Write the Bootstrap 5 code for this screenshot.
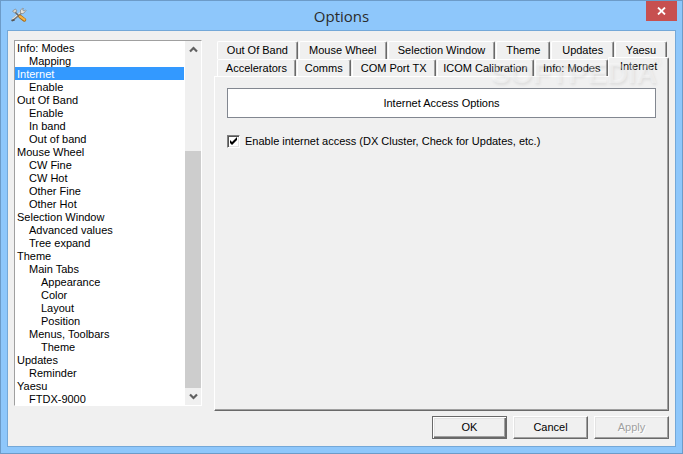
<!DOCTYPE html>
<html lang="en">
<head>
<meta charset="utf-8">
<meta name="viewport" content="width=device-width, initial-scale=1">
<title>Options</title>
<link href="https://cdn.jsdelivr.net/npm/bootstrap@5.3.0/dist/css/bootstrap.min.css" rel="stylesheet">
<style>
body{font:11px/13px "Liberation Sans",Arial,sans-serif;color:#000;background:#8ec7fb}
button,input{font:inherit;color:inherit}
.win{min-height:100vh;border:1px solid #6c9bc8;background:#8ec7fb;padding:0 6px 6px}
.title-bar{height:29px}
.title-bar h1{font:15px/30px "Open Sans","Noto Sans",sans-serif;color:#2b2b2b}
.close-btn{width:31px;height:20px;background:#c75050;margin-right:-1px}
.app-icon{left:4px;top:6px}
.client{background:#f0f0f0;border:1px solid #74a8d8;padding:9px 6px 7px 6px}
.tree-box{width:188px;background:#fff;border:1px solid #fff;border-top-color:#a0a0a0;border-left-color:#a0a0a0}
.tree-list li{padding-left:2px;height:13px;line-height:14px;white-space:nowrap;margin-right:1px}
.tree-list .lv1{padding-left:14px}
.tree-list .lv2{padding-left:26px}
.tree-list .picked{background:#3399ff;color:#fff}
.scroller{width:16px;background:#f0f0f0}
.scroller button{height:17px;line-height:0}
.track{padding-top:93px}
.thumb{background:#cdcdcd}
.main-side{margin-left:12px}
.tabs-a,.tabs-b{display:grid;height:18px;padding:0 1px 0 3px}
.tabs-a{grid-template-columns:82fr 89fr 109fr 55fr 64fr 53fr;margin-top:1px}
.tabs-b{grid-template-columns:80fr 55fr 85fr 99fr 74fr 60fr;padding-right:0}
.tab-btn{border:solid;border-width:1px 1px 0 1px;border-color:#fff #696969 #fff #fff;box-shadow:inset -1px 0 #a0a0a0;border-radius:2px 2px 0 0;background:#f0f0f0;padding:0;margin-right:1px;white-space:nowrap;min-width:0}
.tab-btn.current{height:20px;margin:-2px 0 0 -1px;padding-bottom:2px;z-index:1}
.pane{border:1px solid;border-color:#fff #696969 #696969 #fff;box-shadow:inset -1px -1px #a0a0a0;padding:11px 12px 0 12px;margin-top:-1px}
.banner{height:30px;border:1px solid #828790;background:#fff}
.check-row{margin-top:17px;gap:5px}
.tick{appearance:none;width:13px;height:13px;margin:0;border:1px solid;border-color:#808080 #fff #fff #808080;box-shadow:inset 1px 1px #555,inset -1px -1px #e3e3e3;background:#fff}
.tick:checked{background:#fff url("data:image/svg+xml,%3Csvg xmlns='http://www.w3.org/2000/svg' viewBox='0 0 11 11'%3E%3Cpath d='M2 4v3l2 2 5-5V1L4 6z'/%3E%3C/svg%3E") center/11px no-repeat}
.cmds{margin-top:5px;gap:6px}
.cmd{width:75px;height:23px;background:#f0f0f0;border:1px solid;border-color:#fff #696969 #696969 #fff;box-shadow:inset -1px -1px #a0a0a0,inset 1px 1px #e3e3e3;padding:0 0 1px}
.cmd.main-cmd{border-color:#696969;box-shadow:inset 1px 1px #fff,inset -1px -1px #696969,inset -2px -2px #a0a0a0,inset 2px 2px #e3e3e3}
.cmd:disabled{color:#a0a0a0;text-shadow:1px 1px #fff}
.wmark{right:25px;top:56px;font:bold 29px/32px "Liberation Sans",Arial,sans-serif;color:rgba(255,255,255,.35);text-shadow:1px 2px 3px rgba(0,0,0,.07);pointer-events:none;z-index:2}
.wmark sup{font-size:12px;font-weight:400;position:absolute;left:100%;top:0;line-height:10px;margin-left:-5px}
</style>
<script src="https://cdn.jsdelivr.net/npm/bootstrap@5.3.0/dist/js/bootstrap.bundle.min.js"></script>
</head>
<body>
<div class="win d-flex flex-column position-relative">
  <header class="title-bar d-flex justify-content-center align-items-start position-relative">
    <svg class="app-icon position-absolute" width="16" height="16" viewBox="0 0 16 16" aria-hidden="true">
      <path d="M1.500 13L11 5" stroke="#777" stroke-width="2.600"/><path d="M1 12.400L10.500 4.500" stroke="#ecece6" stroke-width="1.200"/>
      <path d="M9.500 6V3l2.500-2 .5.500L11.500 3l1.500 1 1.500-1 .5.500L13 6l-2 .8z" fill="#e2e2de" stroke="#777" stroke-width=".6"/>
      <path d="M4 5l5 5" stroke="#666" stroke-width="1.500"/><path d="M1.500 4l3-2 1.500 2-2.500 2z" fill="#d8d6cc" stroke="#777" stroke-width=".6"/>
      <path d="M9 9.500l4.500 3.500" stroke="#a66a16" stroke-width="3.500" stroke-linecap="round"/><path d="M9 9.300l4.500 3.300" stroke="#f6b244" stroke-width="2.200" stroke-linecap="round"/>
      <path d="M0 13l3-1 1 1.500-3 1z" fill="#555"/>
    </svg>
    <h1 class="m-0">Options</h1>
    <button class="close-btn border-0 p-0 position-absolute top-0 end-0 d-flex align-items-center justify-content-center" aria-label="Close">
      <svg width="9" height="8" viewBox="0 0 9 8"><path d="M1 .5l7 7M8 .5l-7 7" stroke="#fff" stroke-width="1.800"/></svg>
    </button>
  </header>
  <main class="client flex-grow-1 d-flex flex-column">
    <div class="d-flex flex-grow-1">
      <div class="tree-box d-flex align-self-start">
        <ul class="tree-list list-unstyled m-0 flex-grow-1" role="tree" aria-label="Option pages">
          <li role="treeitem">Info: Modes</li>
          <li role="treeitem" class="lv1">Mapping</li>
          <li role="treeitem" class="picked" aria-selected="true">Internet</li>
          <li role="treeitem" class="lv1">Enable</li>
          <li role="treeitem">Out Of Band</li>
          <li role="treeitem" class="lv1">Enable</li>
          <li role="treeitem" class="lv1">In band</li>
          <li role="treeitem" class="lv1">Out of band</li>
          <li role="treeitem">Mouse Wheel</li>
          <li role="treeitem" class="lv1">CW Fine</li>
          <li role="treeitem" class="lv1">CW Hot</li>
          <li role="treeitem" class="lv1">Other Fine</li>
          <li role="treeitem" class="lv1">Other Hot</li>
          <li role="treeitem">Selection Window</li>
          <li role="treeitem" class="lv1">Advanced values</li>
          <li role="treeitem" class="lv1">Tree expand</li>
          <li role="treeitem">Theme</li>
          <li role="treeitem" class="lv1">Main Tabs</li>
          <li role="treeitem" class="lv2">Appearance</li>
          <li role="treeitem" class="lv2">Color</li>
          <li role="treeitem" class="lv2">Layout</li>
          <li role="treeitem" class="lv2">Position</li>
          <li role="treeitem" class="lv1">Menus, Toolbars</li>
          <li role="treeitem" class="lv2">Theme</li>
          <li role="treeitem">Updates</li>
          <li role="treeitem" class="lv1">Reminder</li>
          <li role="treeitem">Yaesu</li>
          <li role="treeitem" class="lv1">FTDX-9000</li>
        </ul>
        <div class="scroller d-flex flex-column">
          <button class="border-0 bg-transparent p-0" aria-label="Scroll up"><svg width="9" height="7" viewBox="0 0 9 7"><path d="M1 5.500l3.500-3.500L8 5.500" fill="none" stroke="#606060" stroke-width="2.200"/></svg></button>
          <div class="track flex-grow-1 d-flex"><div class="thumb w-100"></div></div>
          <button class="border-0 bg-transparent p-0" aria-label="Scroll down"><svg width="9" height="7" viewBox="0 0 9 7"><path d="M1 1.500l3.500 3.500L8 1.500" fill="none" stroke="#606060" stroke-width="2.200"/></svg></button>
        </div>
      </div>
      <section class="main-side flex-grow-1 d-flex flex-column">
        <div role="tablist" aria-label="Pages">
          <div class="tabs-a" role="presentation">
            <button class="tab-btn" role="tab">Out Of Band</button>
            <button class="tab-btn" role="tab">Mouse Wheel</button>
            <button class="tab-btn" role="tab">Selection Window</button>
            <button class="tab-btn" role="tab">Theme</button>
            <button class="tab-btn" role="tab">Updates</button>
            <button class="tab-btn" role="tab">Yaesu</button>
          </div>
          <div class="tabs-b" role="presentation">
            <button class="tab-btn" role="tab">Accelerators</button>
            <button class="tab-btn" role="tab">Comms</button>
            <button class="tab-btn" role="tab">COM Port TX</button>
            <button class="tab-btn" role="tab">ICOM Calibration</button>
            <button class="tab-btn" role="tab">Info: Modes</button>
            <button class="tab-btn current" role="tab" aria-selected="true">Internet</button>
          </div>
        </div>
        <div class="pane flex-grow-1" role="tabpanel">
          <div class="banner d-flex align-items-center justify-content-center">Internet Access Options</div>
          <div class="check-row d-flex align-items-center">
            <input class="tick" type="checkbox" id="net" checked>
            <label for="net">Enable internet access (DX Cluster, Check for Updates, etc.)</label>
          </div>
        </div>
      </section>
    </div>
    <div class="cmds d-flex justify-content-end">
      <button class="cmd main-cmd">OK</button>
      <button class="cmd">Cancel</button>
      <button class="cmd" disabled>Apply</button>
    </div>
  </main>
  <div class="wmark position-absolute">SOFTPEDIA<sup>®</sup></div>
</div>
</body>
</html>
